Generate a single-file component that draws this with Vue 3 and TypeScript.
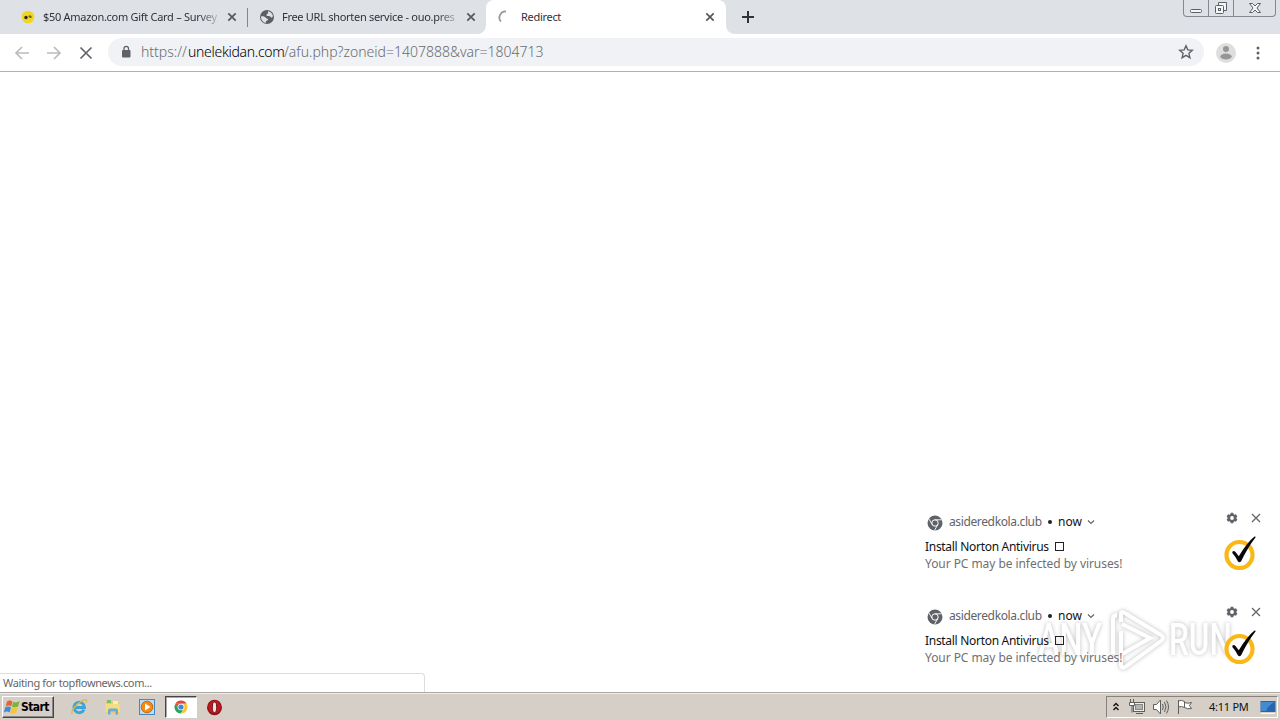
<template>
  <div class="desktop">
    <header class="tab-strip">
      <div v-for="tab in tabs" :key="tab.kind" :class="['tab', tab.kind, { active: tab.active }]">
        <svg v-if="tab.kind === 'survey'" class="favicon" viewBox="0 0 16 16">
          <circle cx="8" cy="8" r="6.3" fill="#f0d522" />
          <circle cx="6" cy="8.500" r="1.700" fill="#29291c" /><path d="M8 7l2-.8 1.500.8v2H10z" fill="#6b6224" />
        </svg>
        <svg v-else-if="tab.kind === 'shorten'" class="favicon" viewBox="0 0 16 16">
          <circle cx="8" cy="8" r="7" fill="#5c6065" />
          <path d="M2 7.500c2-.5 4 .2 5 1.400 1 .9 2.300.6 2 1.800-.3 1-1.800.7-2 1.700L6.700 14C3.800 13.300 2 11 2 7.500zM9 2.200c2.700.4 4.600 2.300 5 5l-1.400 1.600c-1-.3-1.300-1.600-2.600-1.700-1 0-2.200.2-2.500-.8C7.300 5 9.700 5 9 2.200z" fill="#dee1e6" />
        </svg>
        <svg v-else class="favicon" viewBox="0 0 16 16">
          <path d="M4 12.500A6 6 0 0 1 9 2.500" fill="none" stroke="#9a9a9a" stroke-width="1.800" />
        </svg>
        <span class="tab-title">{{ tab.title }}</span>
        <svg class="tab-close" viewBox="0 0 10 10"><path d="M1.300 1.300l7.400 7.400M8.700 1.300L1.300 8.700" /></svg>
      </div>
      <svg class="new-tab" viewBox="0 0 12 12"><path d="M6 0v12M0 6h12" /></svg>
      <div class="window-buttons">
        <span><svg viewBox="0 0 14 14"><rect x="1.500" y="8.500" width="11" height="3" rx="1" /></svg></span>
        <span><svg viewBox="0 0 14 14"><path d="M4.500 4V1.500h8v8H10" /><rect x="1.500" y="4.500" width="8" height="8" rx="1" /><rect x="4.500" y="7.500" width="2" height="2" /></svg></span>
        <span><svg viewBox="0 0 14 14"><path d="M1.500 2.500h3L7 5l2.500-2.500h3L9 7l3.500 4.500h-3L7 9l-2.500 2.500h-3L5 7z" /></svg></span>
      </div>
    </header>

    <nav class="toolbar">
      <svg class="nav-icon muted" viewBox="0 0 16 16"><path d="M15 8H2M8 2L2 8l6 6" /></svg>
      <svg class="nav-icon muted" viewBox="0 0 16 16"><path d="M1 8h13M8 2l6 6-6 6" /></svg>
      <svg class="nav-icon" viewBox="0 0 16 16"><path d="M2.500 2.500l11 11M13.500 2.500l-11 11" /></svg>
      <div class="omnibox">
        <svg class="lock" viewBox="0 0 10 14">
          <rect x="1" y="5" width="8.500" height="7.500" rx="1" fill="#5f6368" />
          <path d="M3 5V3.600a2.250 2.250 0 0 1 4.500 0V5" fill="none" stroke="#5f6368" stroke-width="1.300" />
        </svg>
        <div class="url"><span class="scheme">https://</span><span class="host">unelekidan.com</span><span class="path">/afu.php?zoneid=1407888&amp;var=1804713</span></div>
        <svg class="star" viewBox="0 0 16 16"><path d="M8 1.800l1.800 4.100 4.500.4-3.400 3 1 4.400L8 11.400l-3.900 2.300 1-4.400-3.400-3 4.500-.4z" /></svg>
      </div>
      <svg class="avatar" viewBox="0 0 20 20">
        <circle cx="10" cy="10" r="10" fill="#dedede" />
        <circle cx="10" cy="6" r="3" fill="#969696" />
        <ellipse cx="10" cy="13.500" rx="5.700" ry="3" fill="#969696" />
      </svg>
      <svg class="more" viewBox="0 0 4 14"><circle cx="2" cy="2" r="1.500" /><circle cx="2" cy="7" r="1.500" /><circle cx="2" cy="12" r="1.500" /></svg>
    </nav>

    <main class="page">
      <div class="status-bubble"><span>Waiting for topflownews.com...</span></div>
    </main>

    <footer class="taskbar">
      <button class="start">
        <svg viewBox="0 0 16 16">
          <path d="M3 2.500Q5.500.5 8.500 2.500L7.300 7.300Q4.500 5.800 1.600 7.500z" fill="#e8642c" />
          <path d="M9.200 2.800Q12 4.200 15.700 2.300L14 7.500Q11.500 9 8 7.700z" fill="#79b43b" />
          <path d="M1.300 8.300Q4.300 6.800 7 8.200L5.700 13.500Q3 11.700-.2 13.500z" fill="#3d8dd4" />
          <path d="M7.700 8.600Q10.700 10 13.700 8.400L12.200 13.500Q9 15.500 6.400 13.700z" fill="#f8c433" />
        </svg>
        <span>Start</span>
      </button>
      <div class="launch">
        <div class="app">
          <svg viewBox="0 0 18 18">
            <path d="M14 11.700A5.300 5.300 0 1 1 14.500 9.500H5" fill="none" stroke="#3ba4df" stroke-width="2.900" />
            <path d="M2.300 16C.2 13 7 5.500 12.500 2.600 16 .7 17.400 1.600 16 4.600" fill="none" stroke="#e5b63a" stroke-width="1.300" />
          </svg>
        </div>
        <div class="app">
          <svg viewBox="0 0 18 18">
            <path d="M2 3h5l1 1h7v11H2z" fill="#eccb67" />
            <path d="M3 2h4v3H3z" fill="#7ac06c" /><path d="M9 3h5v3H9z" fill="#faf0ba" />
            <path d="M1.500 6h14l1 8h-15z" fill="#f3dc82" />
            <path d="M4 16.500v-4q0-2 2-2h6q2 0 2 2v4h-2.500v-3h-5v3z" fill="#68acd8" />
          </svg>
        </div>
        <div class="app">
          <svg viewBox="0 0 18 18">
            <rect x="1.500" y="1.500" width="15" height="15" fill="#b6dcf6" stroke="#4589bf" />
            <circle cx="9" cy="9" r="5.800" fill="#f28b16" stroke="#ce6813" /><path d="M7 5.500l5.500 3.500L7 12.500z" fill="#fff" />
          </svg>
        </div>
        <div class="app pressed">
          <svg viewBox="0 0 18 18">
            <path d="M3.370 5.750A6.500 6.500 0 0 1 14.630 5.750H9z" fill="#df4a3b" />
            <path d="M3.370 5.750L6.200 10.600 9 9V5.750z" fill="#df4a3b" />
            <path d="M3.370 5.750A6.500 6.500 0 0 0 9 15.500L11.800 10.600Q8.500 13 6.200 10.600z" fill="#27a55b" />
            <path d="M14.630 5.750A6.500 6.500 0 0 1 9 15.500L11.800 10.600Q13 8 10.500 5.750z" fill="#fac638" />
            <circle cx="9" cy="9" r="3.300" fill="#fff" /><circle cx="9" cy="9" r="2.600" fill="#4285dd" />
          </svg>
        </div>
        <div class="app">
          <svg viewBox="0 0 18 18">
            <ellipse cx="8.500" cy="9.500" rx="7.500" ry="7.700" fill="#9b0c14" />
            <ellipse cx="8.500" cy="9" rx="6.300" ry="6.500" fill="#b91b24" />
            <ellipse cx="8.500" cy="9.300" rx="2.200" ry="5.300" fill="#eee4dd" stroke="#721017" />
          </svg>
        </div>
      </div>
      <div class="tray">
        <svg class="chevrons" viewBox="0 0 8 10"><path d="M1.500 4L4 1.500 6.500 4M1.500 8L4 5.500 6.500 8" /></svg>
        <svg class="tray-icon network" viewBox="0 0 18 18">
          <rect x="5.500" y="4.500" width="11" height="9" fill="#eee" /><rect x="7.500" y="6.500" width="7" height="5" fill="#b5b3b0" stroke="#8a8885" />
          <path d="M8 15.500h7M2.500 1v3M5.500 1v3M1.500 4.500h5v3h-5zM4 7.500v7" fill="#fff" />
        </svg>
        <svg class="tray-icon" viewBox="0 0 18 18">
          <path d="M1.500 6.500h3L8.500 2v14l-4-4.500h-3z" fill="#fff" />
          <path d="M10.500 6q1.500 3 0 6M12.500 4q3 5 0 10M14.500 2.500q4 6.500 0 13" fill="none" />
        </svg>
        <svg class="tray-icon" viewBox="0 0 18 18"><path d="M2.500 16V2M2.500 3q3-1.500 6 .5v6q-3-1.800-6-.5M8.500 4.500q3 1.500 7 0l-2 3 2 3q-4 1-7-1" fill="#fff" /></svg>
        <time>4:11 PM</time>
        <svg class="show-desktop" viewBox="0 0 16 14">
          <rect x=".5" y="1" width="15" height="11" fill="#2864af" /><path d="M1 2h14Q9 4 6 11H1z" fill="#438bd0" />
          <path d="M1 13.500h14" stroke="#f4f6f8" />
        </svg>
      </div>
    </footer>

    <div class="watermark">
      <span class="wm-any">ANY</span>
      <svg viewBox="0 0 58 64">
        <path d="M5 46V11q0-4 4-4M13 14V6q0-3 3-1.500L53 27q4 3 0 6L17 59q-4 2-4-2V23" />
        <path d="M14 16l28 14-28 16" />
      </svg>
      <span class="wm-run">RUN</span>
    </div>

    <section class="notifications">
      <article v-for="n in notifications" :key="n.id" class="notification">
        <div class="note-body">
          <div class="note-head">
            <svg class="chrome-mark" viewBox="0 0 16 16">
              <circle cx="8" cy="8" r="7.500" fill="#5f6368" />
              <circle cx="8" cy="8" r="3.200" fill="none" stroke="#fff" />
              <path d="M8 4.800h6.600M5.200 9.600L1.900 3.900M10.800 9.600l-3.300 5.700" fill="none" stroke="#fff" stroke-width=".9" />
            </svg>
            <span class="origin">{{ n.origin }}</span>
            <span class="dot"></span>
            <span class="when">now</span>
            <svg class="expand" viewBox="0 0 8 6"><path d="M1 1.500l3 3 3-3" /></svg>
          </div>
          <div class="note-title"><span>{{ n.title }}</span><i class="missing-glyph"></i></div>
          <div class="note-text">{{ n.message }}</div>
        </div>
        <div class="note-side">
          <div class="note-actions">
            <svg viewBox="0 0 12 12">
              <path d="M4.700.8h2.600l.3 1.500 1 .5 1.400-.5 1.300 2.200L10.200 6l1.100 1.500L10 9.700l-1.400-.5-1 .5-.3 1.500H4.700l-.3-1.500-1-.5-1.400.5L.7 7.500 1.800 6 .7 4.500 2 2.300l1.400.5 1-.5z" fill="#5f6368" />
              <circle cx="6" cy="6" r="1.900" fill="#fff" />
            </svg>
            <svg viewBox="0 0 12 12"><path d="M2 2l8 8M10 2l-8 8" fill="none" stroke="#666" stroke-width="1.300" /></svg>
          </div>
          <svg class="norton" viewBox="0 0 36 36">
            <circle cx="16.500" cy="20" r="13" fill="#fff" stroke="#fab817" stroke-width="4.200" />
            <path d="M9.500 16.500q1.500-1 3 .5l3.300 4.200Q24 7.500 31.500 1.500q1.300-.5 1 1Q25 12 18 26.500q-1.800 1.500-3 0Q12.500 21.500 9.300 18z" fill="#080808" />
          </svg>
        </div>
      </article>
    </section>
  </div>
</template>

<script setup lang="ts">
interface Tab {
  kind: 'survey' | 'shorten' | 'redirect';
  title: string;
  active?: boolean;
}

interface Notification {
  id: number;
  origin: string;
  title: string;
  message: string;
}

const tabs: Tab[] = [
  { kind: 'survey', title: '$50 Amazon.com Gift Card – Survey' },
  { kind: 'shorten', title: 'Free URL shorten service - ouo.pres' },
  { kind: 'redirect', title: 'Redirect', active: true },
];

const notifications: Notification[] = [1, 2].map((id) => ({
  id,
  origin: 'asideredkola.club',
  title: 'Install Norton Antivirus',
  message: 'Your PC may be infected by viruses!',
}));
</script>

<style>
body { margin: 0; overflow: hidden; }
</style>

<style scoped>
* { box-sizing: border-box; }
svg { display: block; flex-shrink: 0; }
.desktop {
  position: relative;
  display: flex; flex-direction: column;
  width: 1280px; height: 720px;
  background: #fff;
  font-family: "Noto Sans", "Open Sans", sans-serif;
  font-size: 11px;
  color: #111;
  overflow: hidden;
  white-space: nowrap;
}

/* tabs */
.tab-strip { display: flex; height: 34px; background: #dee1e6; flex-shrink: 0; }
.tab { display: flex; align-items: center; height: 34px; padding-right: 11px; }
.tab.survey { width: 248px; padding-left: 20px; position: relative; }
.tab.survey::after { content: ""; position: absolute; right: 0; top: 8px; width: 1px; height: 19px; background: #83868b; }
.tab.shorten { width: 238px; padding-left: 11px; padding-right: 10px; }
.tab.active { position: relative; width: 240px; padding-left: 11px; background: #fff; border-radius: 8px 8px 0 0; }
.tab.active::before, .tab.active::after {
  content: ""; position: absolute; bottom: 0; width: 8px; height: 8px;
}
.tab.active::before { left: -8px; background: radial-gradient(circle at 0 0, transparent 7.5px, #fff 8px); }
.tab.active::after { right: -8px; background: radial-gradient(circle at 100% 0, transparent 7.5px, #fff 8px); }
.favicon { width: 16px; height: 16px; margin-right: 7px; }
.active .favicon { margin-right: 8px; }
.tab-title { width: 177px; color: #303238; letter-spacing: -0.29px; line-height: 18px; }
.active .tab-title { letter-spacing: -0.3px; }
.survey .tab-title, .shorten .tab-title { -webkit-mask-image: linear-gradient(to right, #000 155px, transparent 180px); }
.tab-close { width: 10px; height: 10px; margin-left: auto; fill: none; stroke: #55585d; stroke-width: 1.7; }
.new-tab { width: 12px; height: 12px; margin: 11px 0 0 16px; stroke: #303238; stroke-width: 2; }
.window-buttons {
  display: flex; margin-left: auto; margin-right: 4px;
  width: 93px; height: 17px;
  border: 1px solid #85888e; border-top: 0; border-radius: 0 0 4px 4px;
}
.window-buttons span { display: flex; justify-content: center; width: 25px; border-right: 1px solid #85888e; }
.window-buttons span:last-child { width: 41px; border: 0; }
.window-buttons svg { width: 14px; height: 14px; margin-top: 1px; fill: #f5f5f5; stroke: #5c6065; }

/* address bar */
.toolbar { display: flex; align-items: center; height: 38px; padding-left: 14px; border-bottom: 1px solid #b0b0ae; flex-shrink: 0; }
.nav-icon { width: 16px; height: 16px; margin-right: 16px; fill: none; stroke: #5f6368; stroke-width: 1.7; }
.nav-icon.muted { stroke: #bcbcbc; }
.omnibox { display: flex; align-items: center; width: 1096px; height: 28px; margin-left: -2px; margin-top: -1px; padding: 0 10px 0 13px; background: #f0f2f5; border-radius: 14px; }
.lock { width: 10px; height: 14px; margin-right: 10px; }
.url { display: flex; font-size: 14px; line-height: 20px; color: #686c71; font-weight: 300; }
.scheme { width: 47px; }
.host { width: 96px; color: #000; letter-spacing: -0.3px; }
.star { width: 16px; height: 16px; margin-left: auto; fill: none; stroke: #5f6368; stroke-width: 1.4; }
.avatar { width: 20px; height: 20px; margin-left: 12px; }
.more { width: 4px; height: 14px; margin-left: 20px; fill: #5f6368; }

.page { display: flex; align-items: flex-end; flex: 1; }
.status-bubble { width: 425px; height: 19px; padding-left: 3px; border: 1px solid #dcdcdc; border-left: 0; border-bottom: 0; border-radius: 0 4px 0 0; line-height: 18px; color: #666; letter-spacing: -0.37px; }

/* taskbar */
.taskbar { display: flex; align-items: center; height: 28px; padding: 2px 2px 0; background: #d5cfc7; border-top: 1px solid #aaa9a3; box-shadow: inset 0 1px #efede8; flex-shrink: 0; }
.start {
  display: flex; align-items: center; gap: 1px;
  width: 52px; height: 22px; margin-top: -1px; padding: 0 1px;
  background: #d5cfc7; color: #000;
  border: 1px solid; border-color: #fff #444 #444 #fff;
  box-shadow: inset -1px -1px #888;
  font: bold 12px "DejaVu Sans Condensed", sans-serif;
  letter-spacing: -0.6px;
}
.start svg { width: 16px; height: 16px; }
.launch { display: flex; margin-left: 9px; margin-top: -1px; gap: 2px; }
.app { display: flex; align-items: center; justify-content: center; width: 32px; height: 22px; }
.app svg { width: 18px; height: 18px; }
.app.pressed { background: #fff; border: 1px solid; border-color: #444 #fff #fff #444; box-shadow: inset 1px 1px #aaa; }
.tray { display: flex; align-items: center; width: 172px; height: 22px; margin-left: auto; margin-top: -1px; padding-left: 5px; border: 1px solid; border-color: #87837c #fff #fff #87837c; }
.chevrons { width: 8px; height: 10px; fill: none; stroke: #111; stroke-width: 1.4; margin-right: 8px; }
.tray-icon { width: 18px; height: 18px; margin-right: 6px; stroke: #5f5e5b; stroke-width: 1; }
time { margin-left: 9px; width: 41px; margin-top: -1px; color: #111; letter-spacing: -0.25px; }
.show-desktop { width: 16px; height: 14px; margin-left: 10px; }

/* web notifications */
.notifications { position: absolute; left: 925px; top: 505px; width: 355px; }
.notification { display: flex; height: 94px; }
.note-body { width: 261px; font-size: 12px; padding-top: 7px; }
.note-head { display: flex; align-items: center; height: 18px; margin-left: 2px; }
.chrome-mark { width: 16px; height: 16px; margin-top: 3px; margin-right: 6px; }
.origin { width: 93px; color: #5f6368; letter-spacing: -0.37px; }
.dot { width: 4px; height: 4px; border-radius: 50%; background: #222; margin: 1px 6px 0 6px; }
.when { width: 25px; }
.expand { width: 8px; height: 6px; margin-top: 2px; margin-left: 4px; fill: none; stroke: #666; stroke-width: 1.2; }
.note-title { display: flex; align-items: center; height: 17px; margin-top: 8px; }
.note-title span { width: 126px; letter-spacing: -0.3px; }
.missing-glyph { width: 9px; height: 9px; margin-left: 4px; border: 1px solid #222; }
.note-text { height: 17px; line-height: 17px; color: #707070; letter-spacing: -0.06px; }
.note-side { width: 94px; }
.note-actions { display: flex; gap: 12px; padding: 7px 0 0 40px; }
.note-actions svg { width: 12px; height: 12px; }
.norton { width: 36px; height: 36px; margin: 11px 0 0 37px; }

/* corner brand mark, sits under the notification text */
.watermark { position: absolute; left: 1038px; top: 608px; display: flex; align-items: center; width: 194px; height: 64px; opacity: 0.8; color: #fff; font: 500 45px/64px Roboto, sans-serif; filter: drop-shadow(0 0 2px #aaa); pointer-events: none; }
.watermark span { display: block; width: 67px; transform-origin: left center; transform: scaleX(0.72); }
.watermark svg { width: 58px; height: 64px; margin: 0 3px 0 3px; fill: none; stroke: #fff; stroke-width: 4; }
.watermark .wm-run { width: 62px; transform: scaleX(0.7); }
</style>
